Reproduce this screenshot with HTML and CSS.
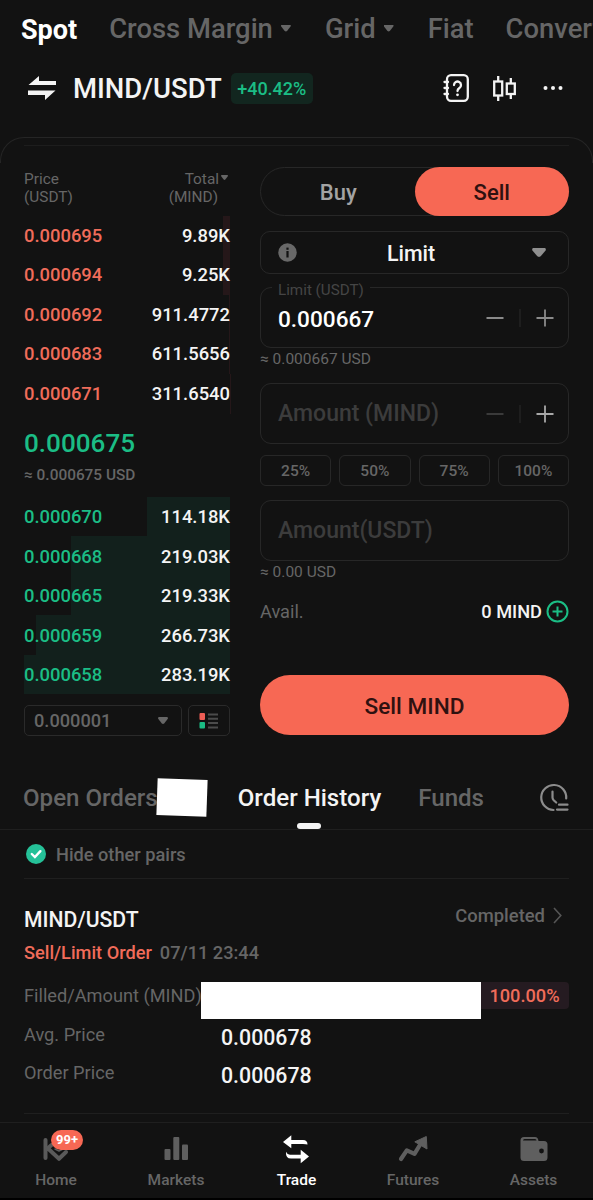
FILE: index.html
```html
<!DOCTYPE html>
<html lang="en">
<head>
    <meta charset="UTF-8">
    <meta name="viewport" content="width=device-width, initial-scale=1.0">
    <title>MIND/USDT Spot</title>
    <link rel="stylesheet" href="styles.css">
</head>
<body>
    <div class="app">
        <nav class="market-tabs">
            <a class="active">Spot</a>
            <a>Cross Margin <i class="caret"></i></a>
            <a>Grid <i class="caret"></i></a>
            <a>Fiat</a>
            <a>Convert</a>
        </nav>

        <header class="pair-header">
            <svg class="swap-icon" width="28" height="24" viewBox="0 0 28 24" fill="#f4f4f4">
                <path d="M0.500 9 L11 0 V5 H28 V9 Z"/>
                <path d="M0 14.500 H27.500 L17 24 V19 H0 Z"/>
            </svg>
            <h1>MIND/USDT</h1>
            <span class="change">+40.42%</span>
            <div class="header-icons">
                <svg width="26" height="28" viewBox="0 0 26 28" fill="none" stroke="#f4f4f4" stroke-width="2.300">
                    <rect x="4" y="1.200" width="20.800" height="25.600" rx="4"/>
                    <path d="M1.500 8 H5 M1.500 14 H5 M1.500 20 H5" stroke-linecap="round"/>
                    <path d="M11 11 A3.500 3.500 0 1 1 16.400 14 Q14.500 15.200 14.500 17" stroke-linecap="round"/>
                    <circle cx="14.500" cy="20.800" r="1.400" fill="#f4f4f4" stroke="none"/>
                </svg>
                <svg class="candles" width="23" height="25" viewBox="0 0 23 25" fill="none" stroke="#f4f4f4" stroke-width="2.300">
                    <rect x="1.200" y="5.500" width="8" height="14"/>
                    <path d="M5.200 0 V5 M5.200 19 V25"/>
                    <rect x="13.800" y="7.500" width="8" height="10.500"/>
                    <path d="M17.800 2 V7 M17.800 18 V23"/>
                </svg>
                <svg width="20" height="6" viewBox="0 0 20 6" fill="#f4f4f4">
                    <circle cx="2.500" cy="3" r="2"/>
                    <circle cx="10" cy="3" r="2"/>
                    <circle cx="17.500" cy="3" r="2"/>
                </svg>
            </div>
        </header>

        <div class="panel-edge"><div class="line"></div></div>

        <main class="trade">
            <section class="book">
                <div class="book-head">
                    <span>Price<br>(USDT)</span>
                    <span class="right">Total<i class="caret small"></i><br><span class="unit">(MIND)</span></span>
                </div>
                <div class="rows asks">
                    <div class="row"><i class="depth" style="width: 3.6%"></i><b>0.000695</b><em>9.89K</em></div>
                    <div class="row"><i class="depth" style="width: 3.3%"></i><b>0.000694</b><em>9.25K</em></div>
                    <div class="row"><i class="depth" style="width: 0.4%"></i><b>0.000692</b><em>911.4772</em></div>
                    <div class="row"><i class="depth" style="width: 0.3%"></i><b>0.000683</b><em>611.5656</em></div>
                    <div class="row"><i class="depth" style="width: 0.1%"></i><b>0.000671</b><em>311.6540</em></div>
                </div>
                <div class="last">
                    <strong>0.000675</strong>
                    <span>≈ 0.000675 USD</span>
                </div>
                <div class="rows bids">
                    <div class="row"><i class="depth" style="width: 40.3%"></i><b>0.000670</b><em>114.18K</em></div>
                    <div class="row"><i class="depth" style="width: 77.3%"></i><b>0.000668</b><em>219.03K</em></div>
                    <div class="row"><i class="depth" style="width: 77.4%"></i><b>0.000665</b><em>219.33K</em></div>
                    <div class="row"><i class="depth" style="width: 94.2%"></i><b>0.000659</b><em>266.73K</em></div>
                    <div class="row"><i class="depth" style="width: 100%"></i><b>0.000658</b><em>283.19K</em></div>
                </div>
                <div class="book-tools">
                    <div class="precision">0.000001 <i class="caret"></i></div>
                    <div class="layout-btn">
                        <svg width="20" height="16" viewBox="0 0 20 16">
                            <rect x="0.500" y="0" width="5.500" height="7" rx="1" fill="#ee5d55"/>
                            <rect x="0.500" y="9" width="5.500" height="6.500" rx="1" fill="#1bbd85"/>
                            <path d="M9 1.500 H19 M9 5.700 H19 M9 10 H19 M9 14.500 H19" stroke="#4b4b4b" stroke-width="2"/>
                        </svg>
                    </div>
                </div>
            </section>

            <section class="form">
                <div class="side-toggle">
                    <span>Buy</span>
                    <span class="sell">Sell</span>
                </div>
                <div class="order-type">
                    <svg width="19" height="19" viewBox="0 0 19 19">
                        <circle cx="9.500" cy="9.500" r="9.200" fill="#686868"/>
                        <rect x="8.400" y="8" width="2.200" height="6.500" fill="#121212"/>
                        <rect x="8.400" y="4.600" width="2.200" height="2.200" fill="#121212"/>
                    </svg>
                    <span>Limit</span>
                    <i class="caret big"></i>
                </div>
                <div class="field limit">
                    <label>Limit (USDT)</label>
                    <span class="value">0.000667</span>
                    <svg class="stepper" width="68" height="20" viewBox="0 0 68 20" stroke="#8a8a8a" stroke-width="1.800">
                        <path d="M0.500 10 H17.500 M50.500 10 H67.500 M59 1.500 V18.500"/>
                        <path d="M34 1 V19" stroke="#2a2a2a" stroke-width="1"/>
                    </svg>
                </div>
                <div class="approx">≈ 0.000667 USD</div>
                <div class="field amount">
                    <span class="placeholder">Amount (MIND)</span>
                    <svg class="stepper" width="68" height="20" viewBox="0 0 68 20" stroke="#a8a8a8" stroke-width="1.800">
                        <path d="M0.500 10 H17.500" stroke="#404040"/>
                        <path d="M50.500 10 H67.500 M59 1.500 V18.500"/>
                        <path d="M34 1 V19" stroke="#2a2a2a" stroke-width="1"/>
                    </svg>
                </div>
                <div class="percents">
                    <span>25%</span>
                    <span>50%</span>
                    <span>75%</span>
                    <span>100%</span>
                </div>
                <div class="field total">
                    <span class="placeholder">Amount(USDT)</span>
                </div>
                <div class="approx">≈ 0.00 USD</div>
                <div class="avail">
                    <span>Avail.</span>
                    <b>0 MIND</b>
                    <svg width="23" height="23" viewBox="0 0 23 23" fill="none" stroke="#1bbd85" stroke-width="2">
                        <circle cx="11.500" cy="11.500" r="10"/>
                        <path d="M6.500 11.500 H16.500 M11.500 6.500 V16.500"/>
                    </svg>
                </div>
                <button class="submit">Sell MIND</button>
            </section>
        </main>

        <nav class="order-tabs">
            <span>Open Orders</span>
            <i class="mask"></i>
            <span class="active">Order History</span>
            <span class="funds">Funds</span>
            <svg width="30" height="28" viewBox="0 0 30 28" fill="none" stroke="#8c8c8c" stroke-width="2.200" stroke-linecap="round">
                <path d="M14.500 26 A12.500 12.500 0 1 1 27.200 14.500"/>
                <path d="M13.500 7.500 V13.500 Q13.500 15 14.700 16.200 L17.200 18.500"/>
                <path d="M20 20.700 H28.500 M18 25.600 H28.500"/>
            </svg>
        </nav>

        <div class="hide-pairs">
            <svg width="20" height="20" viewBox="0 0 20 20">
                <circle cx="10" cy="10" r="10" fill="#25c198"/>
                <path d="M5.800 10 L8.900 13 L14.400 7.200" fill="none" stroke="#fff" stroke-width="2.400" stroke-linecap="round"/>
            </svg>
            <span>Hide other pairs</span>
        </div>

        <section class="order">
            <div class="order-title">
                <h2>MIND/USDT</h2>
                <div class="status">
                    Completed
                    <svg width="9" height="17" viewBox="0 0 9 17" fill="none" stroke="#555" stroke-width="1.600">
                        <path d="M1 1 L7.800 8.500 L1 16"/>
                    </svg>
                </div>
            </div>
            <div class="order-kind"><b>Sell/Limit Order</b><span>07/11 23:44</span></div>
            <div class="filled">
                <span>Filled/Amount (MIND)</span>
                <i class="mask-wide"></i>
                <b>100.00%</b>
            </div>
            <div class="detail"><span>Avg. Price</span><b>0.000678</b></div>
            <div class="detail"><span>Order Price</span><b>0.000678</b></div>
        </section>

        <footer class="bottom-nav">
            <a class="home">
                <svg width="28" height="28" viewBox="0 0 28 28" fill="none" stroke="#5a5a5a" stroke-width="4" stroke-linecap="round" stroke-linejoin="round">
                    <path d="M3.500 4 V22"/>
                    <path d="M5 13 L9.500 9 M6 12.500 L17 22.800 L24 16"/>
                    <path d="M13 13 L17 15 L21 13" stroke-width="1.500"/>
                </svg>
                <span class="badge">99+</span>
                <span>Home</span>
            </a>
            <a class="markets">
                <svg width="28" height="28" viewBox="0 0 28 28" fill="#5f5f5f">
                    <rect x="2.500" y="13" width="6" height="11" rx="1"/>
                    <rect x="11.300" y="1" width="6" height="23" rx="1"/>
                    <rect x="20" y="8.500" width="6" height="15.500" rx="1"/>
                </svg>
                <span>Markets</span>
            </a>
            <a class="trade-link active">
                <svg width="28" height="28" viewBox="0 0 28 28" fill="#fff">
                    <path d="M0 6 L8.300 -0.700 V4.100 H20 Q24.500 4.100 24.500 8.600 Q23 7.900 20 7.900 H8.300 V12.300 Z"/>
                    <path d="M26 20.600 L17.700 13.800 V18.700 H7 Q4.200 18.700 3 15.800 Q2.500 22.600 8 22.600 H17.700 V27.300 Z"/>
                </svg>
                <span>Trade</span>
            </a>
            <a class="futures">
                <svg width="30" height="28" viewBox="0 0 30 28">
                    <path d="M3 23 L8.800 14.300 L16.500 17.800 L22.500 8" fill="none" stroke="#5f5f5f" stroke-width="4.200" stroke-linecap="round" stroke-linejoin="round"/>
                    <path d="M16.800 5.800 L28.300 0.500 L29 13 Z" fill="#5f5f5f" stroke="#5f5f5f" stroke-linejoin="round"/>
                </svg>
                <span>Futures</span>
            </a>
            <a class="assets">
                <svg width="28" height="28" viewBox="0 0 28 28">
                    <path d="M4 1 H15 Q18 1 18.500 5 H24 Q27.500 5 27.500 8.500 V21.500 Q27.500 25 24 25 H4 Q0.500 25 0.500 21.500 V4.500 Q0.500 1 4 1 Z" fill="#5f5f5f"/>
                    <path d="M3 4.500 Q3 3 4.500 3 H15 Q16.500 3 16.500 4.500 Z" fill="#121212"/>
                    <circle cx="21.500" cy="15" r="2.400" fill="#121212"/>
                </svg>
                <span>Assets</span>
            </a>
        </footer>
    </div>
</body>
</html>
```
FILE: styles.css
```css
* {
    box-sizing: border-box;
}

body {
    margin: 0;
    background: #000;
    font-family: Roboto, sans-serif;
    font-weight: 500;
    color: #666;
}

.app {
    width: 593px;
    height: 1198px;
    background: #121212;
    overflow: hidden;
}

h1, h2 {
    margin: 0;
    font-weight: 500;
    color: #f4f4f4;
}

b, em, i, strong {
    font-weight: 500;
    font-style: normal;
}

svg {
    flex: none;
    display: block;
    overflow: visible;
}

.caret {
    display: inline-block;
    flex: none;
    width: 10px;
    height: 7px;
    background: currentColor;
    clip-path: polygon(5% 0, 95% 0, 100% 22%, 62% 92%, 50% 100%, 38% 92%, 0 22%);
}

.caret.small {
    width: 7px;
    height: 5px;
    margin-left: 2px;
    vertical-align: 4px;
}

.caret.big {
    width: 14px;
    height: 9px;
    color: #8f8f8f;
}

/* top tabs */
.market-tabs {
    display: flex;
    align-items: center;
    gap: 32px;
    height: 58px;
    padding-left: 21px;
    font-size: 27.4px;
    white-space: nowrap;
}

.market-tabs a {
    display: flex;
    align-items: center;
    gap: 8px;
}

.market-tabs .caret {
    width: 10px;
    height: 7px;
    margin: 0 2px 2px 0;
}

.market-tabs .active {
    padding-top: 2px;
    color: #fff;
    font-size: 27px;
    font-weight: 700;
}

.pair-header {
    display: flex;
    align-items: center;
    height: 60px;
    padding: 0 30px 0 28px;
}

.pair-header h1 {
    margin-left: 17px;
    font-size: 27.5px;
}

.change {
    margin-left: 9px;
    width: 82px;
    height: 31px;
    line-height: 32px;
    border-radius: 5px;
    background: #12261f;
    color: #1bbd85;
    font-size: 18px;
    text-align: center;
}

.header-icons {
    display: flex;
    align-items: center;
    gap: 24px;
    margin-left: auto;
}

.candles {
    margin-right: 3px;
}

.panel-edge {
    height: 26px;
    margin-top: 19px;
    border: 1.5px solid #252525;
    border-bottom: 0;
    border-radius: 24px 24px 0 0;
    padding: 7px 23px 0;
}

.line {
    height: 1px;
    background: #1d1d1d;
}

/* trading area */
.trade {
    display: flex;
    gap: 30px;
    height: 573px;
    padding: 4px 24px 0;
}

.book {
    width: 206px;
}

.book-head {
    display: flex;
    justify-content: space-between;
    padding-top: 3px;
    height: 49px;
    font-size: 15.4px;
    font-weight: 400;
    line-height: 18px;
}

.book-head .right {
    text-align: right;
    margin-right: 2px;
}

.unit {
    margin-right: 10px;
}

.row {
    position: relative;
    display: flex;
    justify-content: space-between;
    align-items: center;
    height: 39.5px;
    font-size: 18.4px;
}

.asks .row {
    padding-bottom: 1px;
}

.row b,
.row em {
    position: relative;
}

.row em {
    color: #f4f4f4;
}

.asks b {
    color: #f06c5a;
}

.bids b {
    color: #1bbd85;
}

.bids .row {
    padding-top: 1px;
}

.depth {
    position: absolute;
    top: 0;
    right: 0;
    bottom: 0;
}

.asks .depth {
    background: #251719;
}

.bids .depth {
    background: #12201c;
}

.last {
    height: 83px;
    padding-top: 13px;
}

.last strong {
    display: block;
    color: #1bbd85;
    font-size: 26.1px;
    line-height: 32px;
}

.last span {
    display: block;
    font-size: 15.4px;
    line-height: 33px;
}

.book-tools {
    display: flex;
    gap: 6px;
    margin-top: 11px;
}

.precision,
.layout-btn {
    display: flex;
    align-items: center;
    height: 31px;
    border: 1px solid #2a2a2a;
    border-radius: 5px;
}

.precision {
    justify-content: space-between;
    width: 158px;
    padding: 0 13px 0 9px;
    font-size: 18.2px;
}

.layout-btn {
    justify-content: center;
    width: 42px;
}

/* order form */
.form {
    flex: 1;
}

.side-toggle {
    display: flex;
    height: 49px;
    border: 1px solid #272727;
    border-radius: 25px;
    font-size: 22px;
    line-height: 49px;
    text-align: center;
    color: #a3a3a3;
}

.side-toggle span {
    flex: 1;
}

.side-toggle .sell {
    margin: -1px;
    line-height: 51px;
    border-radius: 25px;
    background: #f76854;
    color: #2f1110;
}

.order-type {
    display: flex;
    align-items: center;
    justify-content: space-between;
    height: 43px;
    margin-top: 15px;
    padding: 0 22px 0 17px;
    border: 1px solid #272727;
    border-radius: 10px;
    color: #f4f4f4;
    font-size: 21.4px;
}

.order-type span {
    padding: 1px 7px 0 0;
}

.field {
    position: relative;
    display: flex;
    align-items: center;
    justify-content: space-between;
    height: 61px;
    padding: 0 14px 0 17px;
    border: 1px solid #272727;
    border-radius: 11px;
    font-size: 23px;
}

.field label {
    position: absolute;
    top: -7px;
    left: 11px;
    padding: 0 6px;
    background: #121212;
    color: #454545;
    font-size: 15.2px;
    font-weight: 400;
    line-height: 18px;
}

.field .value {
    padding-top: 3px;
    color: #fff;
    font-size: 22.6px;
}

.field .placeholder {
    color: #3c3c3c;
}

.limit {
    margin-top: 13px;
}

.approx {
    height: 22px;
    line-height: 22px;
    font-size: 15.5px;
    font-weight: 400;
}

.amount {
    margin-top: 13px;
}

.percents {
    display: grid;
    grid-template-columns: repeat(4, 1fr);
    gap: 8px;
    margin: 11px 0 14px;
}

.percents span {
    height: 31px;
    border: 1px solid #272727;
    border-radius: 6px;
    font-size: 15.5px;
    line-height: 30px;
    text-align: center;
}

.avail {
    display: flex;
    align-items: center;
    height: 24px;
    margin-top: 16px;
    font-size: 18.2px;
}

.avail span {
    flex: 1;
    font-weight: 400;
}

.avail b {
    margin-right: 4px;
    color: #f4f4f4;
}

.submit {
    display: block;
    width: 100%;
    height: 60px;
    margin-top: 52px;
    padding-top: 3px;
    border: 0;
    border-radius: 30px;
    background: #f76854;
    color: #2f1110;
    font: 500 22.6px Roboto, sans-serif;
}

/* orders */
.order-tabs {
    display: flex;
    align-items: center;
    height: 94px;
    padding: 31px 24px 0 23px;
    border-bottom: 1px solid #1f1f1f;
    font-size: 24.1px;
    white-space: nowrap;
}

.mask {
    width: 50px;
    height: 37px;
    margin: 0 31px 2px -1px;
    background: #fff;
    transform: rotate(2deg);
}

.order-tabs .active {
    position: relative;
    color: #f4f4f4;
}

.order-tabs .active::after {
    content: "";
    position: absolute;
    left: 50%;
    bottom: -17px;
    width: 24px;
    height: 6px;
    margin-left: -12px;
    border-radius: 3px;
    background: #f4f4f4;
}

.funds {
    flex: 1;
    margin-left: 37px;
}

.hide-pairs {
    display: flex;
    align-items: center;
    gap: 10px;
    height: 49px;
    margin: 0 24px;
    padding-left: 2px;
    border-bottom: 1px solid #1f1f1f;
    font-size: 18.2px;
}

.hide-pairs span {
    padding-top: 1px;
}

.order {
    height: 235px;
    margin: 0 24px;
    padding-top: 24px;
    border-bottom: 1px solid #1f1f1f;
    font-size: 18.2px;
}

.order-title {
    display: flex;
    align-items: center;
    justify-content: space-between;
    height: 32px;
    padding-right: 7px;
}

.order-title h2 {
    font-size: 21.2px;
}

.status {
    display: flex;
    align-items: center;
    gap: 8px;
    margin-bottom: 7px;
    font-size: 18.4px;
}

.order-kind {
    display: flex;
    gap: 8px;
    height: 36px;
    line-height: 36px;
}

.order-kind b {
    color: #f06c5a;
}

.filled {
    display: flex;
    align-items: center;
    height: 48px;
    font-weight: 400;
    white-space: nowrap;
}

.filled span {
    width: 177px;
}

.mask-wide {
    width: 280px;
    height: 37px;
    margin-top: 11px;
    background: #fff;
}

.filled b {
    flex: 1;
    height: 27px;
    padding-right: 1px;
    line-height: 28px;
    border-radius: 0 4px 4px 0;
    background: #251b21;
    color: #f06c5a;
    text-align: center;
}

.detail {
    display: flex;
    height: 38px;
    line-height: 32px;
    font-weight: 400;
}

.detail span {
    width: 197px;
}

.detail b {
    padding-top: 3px;
    color: #f4f4f4;
    font-size: 21.3px;
}

/* bottom navigation */
.bottom-nav {
    display: grid;
    grid-template-columns: 112px 128px 113px 120px 121px;
    height: 77px;
    margin-top: 8px;
    border-top: 1px solid #1f1f1f;
    font-size: 15.5px;
}

.bottom-nav a {
    position: relative;
    display: flex;
    flex-direction: column;
    align-items: center;
    gap: 7px;
    padding-top: 13px;
}

.bottom-nav .active {
    color: #fff;
}

.badge {
    position: absolute;
    top: 7px;
    left: 51px;
    width: 32px;
    height: 20px;
    border-radius: 10px;
    background: #f76854;
    color: #fff;
    font-size: 13px;
    font-weight: 700;
    line-height: 20px;
    text-align: center;
}
```
